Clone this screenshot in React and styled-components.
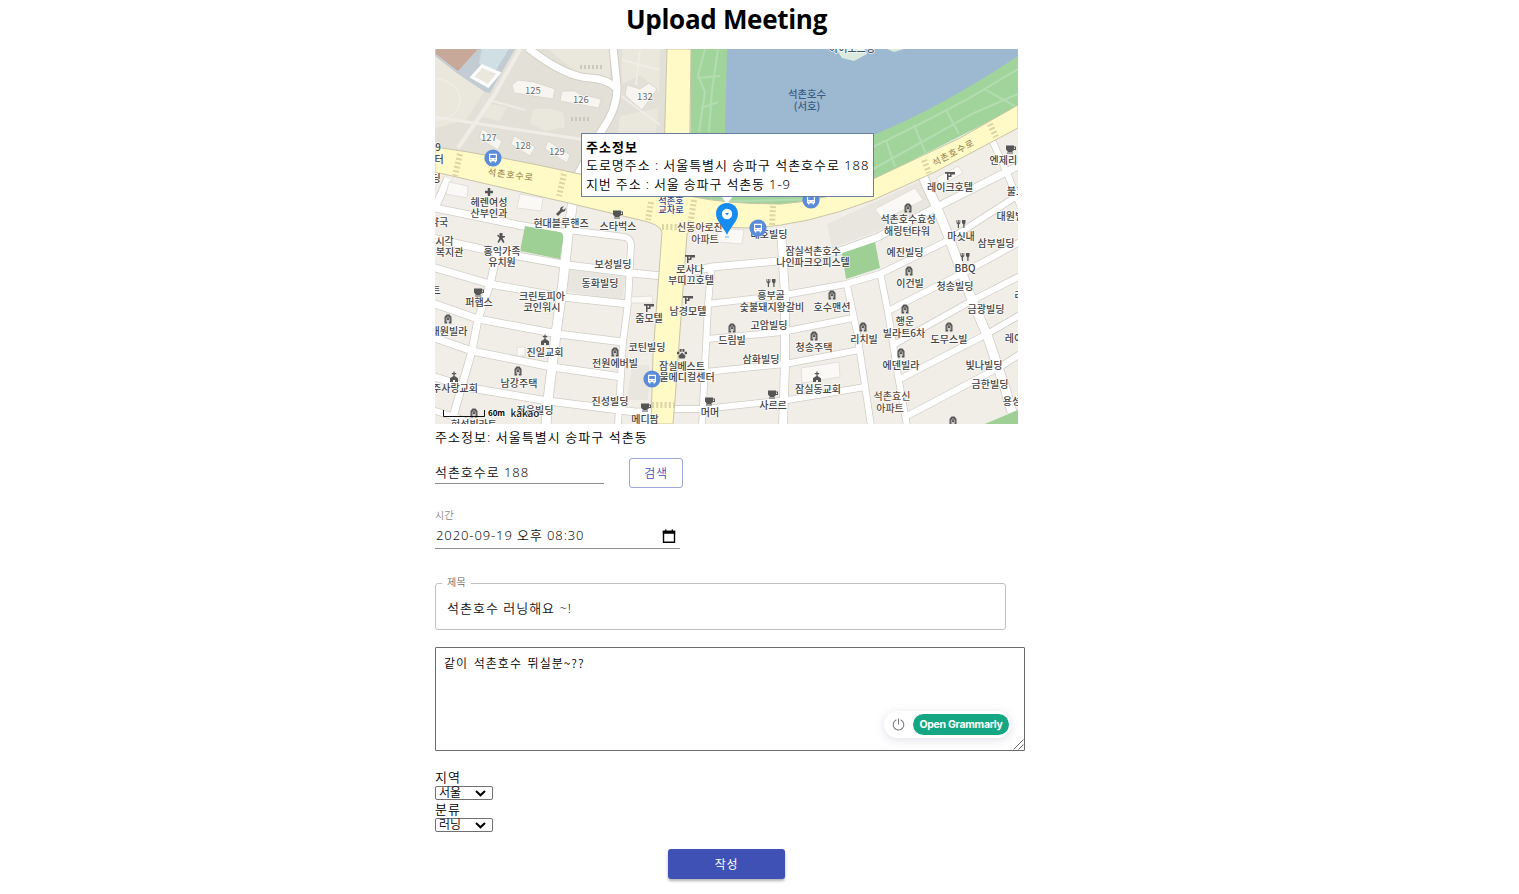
import React from 'react';
import styled, { createGlobalStyle } from 'styled-components';

const GlobalStyle = createGlobalStyle`
  *, *::before, *::after { box-sizing: border-box; }
  body {
    margin: 0;
    background: #fff;
    color: #000;
    font-family: 'Noto Sans', 'Noto Sans CJK KR', sans-serif;
    overflow: hidden;
  }
`;

const Page = styled.main`
  width: 583px;
  height: 894px;
  margin-left: 435px;
  display: flex;
  flex-direction: column;
  align-items: flex-start;
`;

const Title = styled.h1`
  width: 100%;
  height: 49px;
  margin: 0;
  padding-top: 1px;
  font: 700 26px/36px 'Open Sans', 'Noto Sans', sans-serif;
  letter-spacing: -0.3px;
  text-align: center;
`;

const MapFrame = styled.section`
  position: relative;
  width: 583px;
  height: 375px;
`;

const MapSvg = styled.svg`
  display: block;
  width: 583px;
  height: 375px;
`;

const InfoWindow = styled.div`
  position: absolute;
  left: 146px;
  top: 84px;
  width: 293px;
  height: 64px;
  padding: 4px 4px;
  background: #fff;
  border: 1px solid #6a7f9f;
  font-size: 13px;
  line-height: 18.4px;
  white-space: nowrap;
`;

const InfoLine = styled.div`
  font-weight: ${p => (p.$bold ? 700 : 350)};
  letter-spacing: ${p => p.$spacing};
`;

const AddressText = styled.p`
  height: 34px;
  margin: 0;
  font-weight: 350;
  font-size: 13px;
  line-height: 27px;
  letter-spacing: 1.05px;
  white-space: nowrap;
`;

const SearchRow = styled.div`
  display: flex;
  gap: 25px;
  height: 30px;
`;

const LineInput = styled.input`
  width: ${p => p.$width}px;
  height: 26px;
  padding: ${p => p.$pad || '0'};
  border: 0;
  border-bottom: 1px solid #8c8c8c;
  outline: 0;
  background: transparent;
  color: #111;
  font: 350 13px 'Noto Sans', 'Noto Sans CJK KR', sans-serif;
  letter-spacing: ${p => p.$spacing}px;
`;

const SearchButton = styled.button`
  width: 54px;
  height: 30px;
  padding: 0 0 2px;
  border: 1px solid #9fa8da;
  border-radius: 3px;
  background: #fff;
  color: #3f51b5;
  font: 350 12px 'Noto Sans CJK KR', sans-serif;
  letter-spacing: 0.8px;
`;

const DateField = styled.label`
  display: flex;
  flex-direction: column;
  position: relative;
  width: 245px;
  margin-top: 19px;
  color: #858585;
  font-weight: 350;
  font-size: 10px;
  line-height: 16px;
  letter-spacing: 0.4px;
`;

const CalendarIcon = styled.svg`
  position: absolute;
  right: 4px;
  bottom: 5px;
  width: 14px;
  height: 15px;
`;

const TitleField = styled.fieldset`
  width: 571px;
  height: 55px;
  margin: 26px 0 0;
  padding: 0 11px 0 5px;
  border: 1px solid #c0c0c0;
  border-radius: 3px;
  min-width: 0;
`;

const Legend = styled.legend`
  height: 17px;
  margin-left: 1px;
  padding: 0 5px;
  color: #666;
  font-weight: 350;
  font-size: 10px;
  line-height: 14px;
  letter-spacing: 0.4px;
`;

const PlainInput = styled.input`
  display: block;
  width: 100%;
  height: 31px;
  padding: 0 6px;
  border: 0;
  outline: 0;
  color: #111;
  font: 350 13px 'Noto Sans', 'Noto Sans CJK KR', sans-serif;
  letter-spacing: 1px;
`;

const MessageBox = styled.div`
  position: relative;
  width: 590px;
  height: 104px;
  margin-top: 17px;
`;

const Message = styled.textarea`
  display: block;
  width: 590px;
  height: 104px;
  padding: 7px 8px;
  border: 1px solid #6c6c6c;
  border-radius: 1px;
  outline: 0;
  resize: none;
  color: #000;
  font: 350 12px/16px 'Noto Sans CJK KR', monospace;
  letter-spacing: 1px;
  word-spacing: 2px;
`;

const ResizeGrip = styled.svg`
  position: absolute;
  right: 1px;
  bottom: 1px;
  width: 11px;
  height: 11px;
`;

const Grammarly = styled.div`
  position: absolute;
  right: 14px;
  bottom: 13px;
  display: flex;
  align-items: center;
  justify-content: space-between;
  width: 127px;
  height: 27px;
  padding: 0 2px 0 8px;
  border-radius: 14px;
  background: #fff;
  box-shadow: 0 2px 10px rgba(60, 70, 110, 0.16);
`;

const GrammarlyPill = styled.span`
  width: 96px;
  height: 21px;
  border-radius: 11px;
  background: #15a683;
  color: #fff;
  font: 700 10.5px/21px Inter, sans-serif;
  letter-spacing: -0.28px;
  text-align: center;
  white-space: nowrap;
`;

const Choices = styled.div`
  display: flex;
  flex-direction: column;
  margin-top: 17px;
`;

const ChoiceLabel = styled.span`
  height: 18px;
  font-weight: 350;
  font-size: 13px;
  line-height: 18px;
  letter-spacing: 1px;
`;

const SelectBox = styled.div`
  display: flex;
  align-items: center;
  width: 58px;
  height: 14px;
  padding: 0 6px 0 3px;
  border: 1px solid #707070;
  border-radius: 2px;
  justify-content: space-between;
`;

const SelectValue = styled.span`
  font-weight: 350;
  font-size: 12px;
  line-height: 12px;
`;

const SubmitButton = styled.button`
  align-self: center;
  width: 117px;
  height: 30px;
  margin-top: 17px;
  padding: 0 0 2px;
  border: 0;
  border-radius: 3px;
  background: #3f51b5;
  box-shadow: 0 2px 3px rgba(0, 0, 0, 0.3);
  color: #fff;
  font: 400 12px 'Noto Sans CJK KR', sans-serif;
  letter-spacing: 0.8px;
`;

const MapText = styled.text`
  font-family: 'Noto Sans CJK KR', sans-serif;
  font-size: ${p => p.$size || 10}px;
  font-weight: ${p => p.$weight || 500};
  fill: ${p => p.$color || '#444'};
  stroke: ${p => (p.$halo === false ? 'none' : 'rgba(255,255,255,0.75)')};
  stroke-width: 1.6px;
  stroke-linejoin: round;
  paint-order: stroke;
  text-anchor: middle;
`;

const streets = [
  [7, 'M448 178L435 208L523 226L568 233'],
  [9, 'M573 200L568 235L563 282L556 334L548 400L546 426'],
  [6, 'M568 230L625 237Q631 239 631 245L628 303L623 342L618 424'],
  [7, 'M432 238L495 252L568 265L632 273L662 276'],
  [7, 'M432 267L490 284L562 297L628 304'],
  [7, 'M432 303L478 319L558 334L623 342'],
  [7, 'M432 337L472 351L552 367L622 377'],
  [7, 'M432 376L465 387L548 401L635 412L652 412'],
  [6, 'M432 410L455 417L478 426'],
  [7, 'M498 250L490 284L478 319L472 351L461 389L453 417'],
  [7, 'M686 273L712 267L778 261L810 255L840 251L876 238L935 208L1020 165'],
  [6, 'M707 304L785 295L846 284L880 274L947 241L1020 194'],
  [6, 'M707 339L782 332L853 318'],
  [6, 'M705 372L785 364L859 350'],
  [6, 'M673 409L703 409L788 400L865 387'],
  [6, 'M711 270L708 305L702 426'],
  [8, 'M781 228L785 295L785 365L783 426'],
  [6, 'M846 281L857 332L871 426'],
  [6, 'M880 272L888 312L898 376L907 426'],
  [9, 'M923 177L937 208L948 235L970 295L987 335L1005 388L1012 412'],
  [6, 'M888 311L963 273L1020 242'],
  [6, 'M893 345L973 300L1020 276'],
  [6, 'M900 379L987 334L1020 315'],
  [6, 'M907 416L1000 367L1020 354'],
  [6, 'M992 140L1007 173L1020 205'],
];

const labels = [
  [438, 147, '9'], [439, 159, '터'], [436, 178, '딩'],
  [489, 202, '헤렌여성'], [489, 213, '산부인과'], [439, 222, '약국'],
  [561, 223, '현대블루핸즈'], [618, 226, '스타벅스'], [769, 234, '대호빌딩'],
  [950, 187, '레이크호텔'], [1008, 160, '엔제리너'], [1016, 191, '불고'],
  [1015, 216, '대원빌라'], [908, 219, '석촌호수효성'], [907, 231, '해링턴타워'],
  [961, 236, '마싯내'], [996, 243, '삼부빌딩'], [905, 252, '예진빌딩'],
  [965, 268, 'BBQ'], [910, 283, '이건빌'], [955, 286, '청송빌딩'],
  [986, 309, '금광빌딩'], [1019, 295, '러'], [905, 321, '행운'],
  [904, 333, '빌라트6차'], [949, 339, '도무스빌'], [864, 339, '리치빌'],
  [1014, 338, '레이'], [901, 365, '에덴빌라'], [984, 365, '빛나빌딩'],
  [990, 384, '금한빌딩'], [1012, 401, '용성'], [832, 307, '호수맨션'],
  [814, 347, '청송주택'], [818, 389, '잠실동교회'], [813, 251, '잠실석촌호수'],
  [813, 262, '나인파크오피스텔'], [771, 295, '흥부골'], [772, 307, '숯불돼지왕갈비'],
  [769, 325, '고암빌딩'], [732, 340, '드림빌'], [761, 359, '삼화빌딩'],
  [773, 405, '사르르'], [710, 412, '머머'], [645, 419, '메디팜'],
  [682, 366, '잠실베스트'], [687, 377, '물메디컬센터'], [690, 269, '로사나'],
  [691, 280, '부띠끄호텔'], [688, 311, '남경모텔'], [649, 318, '줌모텔'],
  [647, 347, '코틴빌딩'], [615, 363, '전원에버빌'], [610, 401, '진성빌딩'],
  [545, 352, '진일교회'], [519, 383, '남강주택'], [535, 410, '정은빌딩'],
  [474, 424, '현성빌라트'], [455, 388, '주사랑교회'], [449, 331, '대원빌라'],
  [479, 302, '퍼햅스'], [542, 296, '크린토피아'], [542, 307, '코인워시'],
  [502, 251, '홍익가족'], [502, 262, '유치원'], [613, 264, '보성빌딩'],
  [600, 283, '동화빌딩'], [440, 241, '각시각'], [445, 252, '행복지관'], [436, 290, '트'],
];

const blockNumbers = [
  [533, 90, '125'], [581, 99, '126'], [645, 96, '132'],
  [489, 137, '127'], [523, 145, '128'], [557, 151, '129'],
];

const glyphs = {
  home: 'M-3.5 4.5V-2L-1.5 -4.5H1.5L3.5 -2V4.5H.8V1H-.8V4.5Z M-2.1 -1.5V3H-1.5V-1.5Z M-.3 -3V-.4H.3V-3Z M1.5 -1.5V3H2.1V-1.5Z',
  cup: 'M-5 -3.5H3V-2.5H5V1H3L1 3H-3L-5 .5Z M3 -1.5V0H4V-1.5Z M-4 3.5H2V4.5H-4Z',
  bed: 'M-5 -4H5V-1.5H1.5V1H-1.5V4H-3V-2.2H-5Z M-1.5 -2.2V-.4H0V-2.2Z',
  church: 'M-.6 -5.5H.6V-4H2.2V-2.8H.6V-1L4 1.2V5H1V3H-1V5H-4V1.2L-.6 -1V-2.8H-2.2V-4H-.6Z',
  plus: 'M-1.2 -4H1.2V-1.2H4V1.2H1.2V4H-1.2V1.2H-4V-1.2H-1.2Z',
  wrench: 'M4.5 -3L2.5 -1L1 -2.5L3 -4.5Q-1 -5 -1 -1L-5 3L-3 5L1 1Q5 1 4.5 -3Z',
  fork: 'M-4.5 -4H-3.7V-1.5H-3V-4H-2.2V-1.5H-1.5V-4H-.7V-1L-2 .5V4H-3.2V.5L-4.5 -1Z M1 -4H4.5V-1L3.5 .5V4H2.3V.5L1 -1Z',
  child: 'M-1.5 -5H1.5V-2H4V-.8L1.5 0L3.5 4L2.2 5L0 1.5L-2.4 5L-3.5 4L-1.5 0L-4 -2.5L-3 -3.5L-1.5 -2Z',
  paw: 'M-5 -2.2H-2.6V.2H-5Z M-2.4 -5H-.4V-2.2H-2.4Z M.4 -5H2.4V-2.2H.4Z M2.6 -2.2H5V.2H2.6Z M0 -1.6L3.6 2L2.6 4.5H-2.6L-3.6 2Z',
};

const places = [
  ['home', 448, 319], ['home', 615, 352], ['home', 518, 371], ['home', 474, 413],
  ['home', 732, 328], ['home', 814, 336], ['home', 832, 295], ['home', 909, 271],
  ['home', 905, 309], ['home', 863, 327], ['home', 949, 327], ['home', 901, 353],
  ['home', 953, 421], ['home', 908, 208],
  ['cup', 618, 214], ['cup', 479, 292], ['cup', 773, 394], ['cup', 710, 401],
  ['cup', 646, 407], ['cup', 1011, 149],
  ['bed', 950, 176], ['bed', 690, 259], ['bed', 688, 300], ['bed', 649, 308],
  ['church', 545, 340], ['church', 454, 377], ['church', 817, 377],
  ['plus', 489, 192], ['wrench', 561, 211], ['child', 501, 238], ['paw', 682, 354],
  ['fork', 961, 224], ['fork', 965, 257], ['fork', 771, 283],
];

const crosswalks = [
  [460, 154, 455, 176], [564, 174, 559, 196], [651, 202, 648, 220],
  [694, 200, 690, 226], [773, 206, 772, 226], [924, 160, 929, 173], [990, 124, 996, 137],
];

const Bus = ({ x, y }) => (
  <g transform={`translate(${x} ${y})`}>
    <circle r="8.6" fill="#5b8cd9" />
    <path d="M-4 -4.2H4V3.2H3V4.5H1.6V3.2H-1.6V4.5H-3V3.2H-4Z" fill="#fff" />
    <path d="M-2.8 -3H2.8V0H-2.8Z M-2.6 1.2H-1.4V2.1H-2.6Z M1.4 1.2H2.6V2.1H1.4Z" fill="#5b8cd9" />
  </g>
);

function StreetMap() {
  return (
    <MapSvg viewBox="435 49 583 375">
      <rect x="435" y="49" width="583" height="375" fill="#f1eee8" />

      <path d="M435 49H667L664 192L575 173L435 147Z" fill="#e3e0d8" />
      <g fill="#eae7dd">
        <path d="M435 52Q470 66 485 90L466 120L435 128Z" />
        <path d="M533 110Q548 106 563 113L565 127L545 131L530 123Z" />
        <path d="M548 49H610V82L575 72Z" />
        <path d="M622 49H660L659 92L640 75L622 84Z" />
        <path d="M620 116L658 108L656 133H618Z" />
        <path d="M489 104L507 107L500 121L482 117Z" />
      </g>
      <g fill="none" stroke="#efede6" strokeWidth="3">
        <path d="M435 117L500 127L600 142" />
        <path d="M520 49L495 94L458 148" strokeWidth="4" />
        <path d="M480 118L489 100L525 110M622 60L660 70M620 95L660 125M640 50L636 85" strokeWidth="2" />
        <path d="M435 78Q465 84 459 107Q451 121 435 120" strokeWidth="1.5" />
      </g>
      <path d="M435 49H515L490 93L485 92L458 74L435 56Z" fill="#c4ccd3" />
      <path d="M436 49H478L458 71L436 54Z" fill="#c8a898" />
      <path d="M482 49H509L496 70L479 64Z" fill="#cfdfe4" />
      <path d="M482 66L499 73L488 86L472 77Z" fill="#eae7dd" stroke="#fff" strokeWidth="3" />
      <path d="M528 48Q565 77 590 78Q607 79 616 88M613 47L617 86Q618 108 602 130L578 174" fill="none" stroke="#d2cec5" strokeWidth="9" />
      <path d="M528 48Q565 77 590 78Q607 79 616 88M613 47L617 86Q618 108 602 130L578 174" fill="none" stroke="#fff" strokeWidth="7" />
      <g fill="#f7f5f0" stroke="#d8d4cd" strokeWidth=".8">
        <path d="M518 80L534 82L546 86L555 89L553 99L514 93L512 85Z" />
        <path d="M562 91L575 91L579 94L601 99L599 108L560 101Z" />
        <path d="M627 85L640 89L649 83L657 89L642 110L635 104L625 95Z" />
        <path d="M482 129L502 141L498 150L479 138Z" />
        <path d="M514 136L535 147L530 156L511 144Z" />
        <path d="M548 141L570 155L567 163L545 149Z" />
      </g>
      <path d="M580 67H603M571 119H590" stroke="#cbc8bf" strokeWidth="4" strokeDasharray="2 2" />

      <path d="M691 49H1018V107L873 180L824 206H690Z" fill="#a1d49b" />
      <path d="M727 49H1018V56Q940 108 873 135L830 160H727L725 128Z" fill="#9db9d1" />
      <path d="M836 49H864L867 54L854 61L842 58Z M887 49H904L894 52Z" fill="#dce9df" />
      <g fill="none" stroke="#b3ddb1" strokeWidth="2">
        <path d="M705 49L698 75L705 92L699 132M718 49L712 90L709 132M697 78L720 76M701 108L718 102" />
        <path d="M873 147L920 124L966 100L1018 69M873 169L920 143L974 113L1018 94M914 125L926 154M946 110L959 134M886 140L895 167M984 89L1018 108" />
        <path d="M693 200L740 201L825 199" />
      </g>

      <g fill="#e9e6df">
        <path d="M632 365H650L648 400H627Z" />
        <path d="M566 269L626 277L622 301L564 291Z" />
        <path d="M827 224L920 181L934 205L878 231L832 248Z" />
      </g>
      <g fill="none" strokeLinejoin="round">
        {streets.map(([w, d]) => <path key={d} d={d} stroke="#d0cdc7" strokeWidth={w + 1.5} />)}
        {streets.map(([w, d]) => <path key={d} d={d} stroke="#fff" strokeWidth={w} />)}
      </g>
      <g fill="#faf9f5" stroke="#dedbd5" strokeWidth=".8">
        <path d="M449 182L468 186L467 198L446 194Z M520 194L543 198L541 211L517 208Z" />
        <path d="M875 209L915 188L923 200L883 220Z M936 178L958 166L963 173L940 186Z" />
        <path d="M717 228L744 230L742 244L718 242Z M801 368L839 362L840 377L802 383Z" />
        <path d="M517 347H525V356H517Z M631 297L652 296L653 303L631 303Z" />
      </g>
      <path d="M525 226L560 232Q564 233 563 240L560 259L520 251Z M842 253L875 242L880 268L846 279Z M980 426L1018 410V426Z" fill="#9ed095" />

      <path d="M435 147Q500 156 575 173L663 190L667 49H691L689 196Q725 204 780 204Q830 201 873 179L960 138L1018 105V128L935 172L873 200Q805 226 750 228L713 227Q692 224 687 234L675 400L673 424H651L653 355L662 232Q660 224 640 220L560 201L435 172Z" fill="#fffac6" stroke="#c9c4a8" strokeWidth="1" />
      <g stroke="#ddd5a5" strokeWidth="6" strokeDasharray="2 2.2">
        {crosswalks.map(([x1, y1, x2, y2]) => <path key={x1} d={`M${x1} ${y1}L${x2} ${y2}`} />)}
        <path d="M652 405H674M662 227H684" />
      </g>

      {blockNumbers.map(([x, y, t]) => (
        <MapText key={t} x={x} y={y + 3.5} $size={9.5} $color="#6c6c6c" $weight={400}>{t}</MapText>
      ))}
      <MapText x="807" y="98" $size={10.4} $color="#3b5b83" $halo={false}>석촌호수</MapText>
      <MapText x="807" y="110" $size={10.4} $color="#3b5b83" $halo={false}>(서호)</MapText>
      <MapText x="852" y="52" $color="#3d5868">아이오드링</MapText>
      <MapText x="511" y="178" $size={9} $color="#a08e58" $halo={false} transform="rotate(7 511 174)" letterSpacing="1">석촌호수로</MapText>
      <MapText x="953" y="156" $size={9} $color="#a08e58" $halo={false} transform="rotate(-28 953 152)" letterSpacing="1">석촌호수로</MapText>
      <MapText x="671" y="203.5" $size={9.2} $color="#344789">석촌호</MapText>
      <MapText x="671" y="212.5" $size={9.2} $color="#344789">교차로</MapText>
      <MapText x="700" y="231.3" $color="#66503f">신동아로잔</MapText>
      <MapText x="705" y="243" $color="#66503f">아파트</MapText>
      <MapText x="892" y="399.7" $color="#66503f">석촌효신</MapText>
      <MapText x="890" y="411.7" $color="#66503f">아파트</MapText>
      {labels.map(([x, y, t]) => <MapText key={t + x} x={x} y={y + 3.7}>{t}</MapText>)}
      {places.map(([kind, x, y]) => (
        <path key={`${kind}${x}`} d={glyphs[kind]} transform={`translate(${x} ${y})`} fill="#555" fillRule="evenodd" />
      ))}
      <Bus x={493} y={158} />
      <Bus x={758} y={228} />
      <Bus x={811} y={200} />
      <Bus x={652} y={379} />

      <path d="M443.5 410V416.5H484.5V410" fill="none" stroke="#111" />
      <MapText x="496.5" y="416" $size={8} $weight={700} $color="#000">60m</MapText>
      <MapText x="525" y="417" $size={10} $weight={500} $color="#222">kakao</MapText>

      <path d="M721 196H733L727 204Z" fill="#fff" />
      <path d="M727 203C720 203 716 208 716 214C716 221 723 226 727 235C731 226 738 221 738 214C738 208 734 203 727 203Z" fill="#168cf0" />
      <circle cx="727" cy="214" r="5.2" fill="#fff" />
      <path d="M725 213H729L727 215.5Z" fill="#168cf0" />
      <path d="M725 237H729" stroke="#77aee4" />
    </MapSvg>
  );
}

const Chevron = () => (
  <svg width="11" height="7" viewBox="0 0 11 7">
    <path d="M1 1L5.5 5.3L10 1" fill="none" stroke="#000" strokeWidth="2" />
  </svg>
);

export default function App() {
  return (
    <Page>
      <GlobalStyle />
      <Title>Upload Meeting</Title>
      <MapFrame>
        <StreetMap />
        <InfoWindow>
          <InfoLine $bold $spacing="1px">주소정보</InfoLine>
          <InfoLine $spacing="0.95px">도로명주소 : 서울특별시 송파구 석촌호수로 188</InfoLine>
          <InfoLine $spacing="0.85px">지번 주소 : 서울 송파구 석촌동 1-9</InfoLine>
        </InfoWindow>
      </MapFrame>
      <AddressText>주소정보: 서울특별시 송파구 석촌동</AddressText>
      <SearchRow>
        <LineInput $width={169} $spacing={0.95} $pad="1px 0 0" defaultValue="석촌호수로 188" />
        <SearchButton>검색</SearchButton>
      </SearchRow>
      <DateField>
        시간
        <LineInput $width={245} $spacing={0.9} $pad="0 0 2px 1px" defaultValue="2020-09-19 오후 08:30" />
        <CalendarIcon viewBox="0 0 14 15">
          <path d="M1.5 2.5H12.5V13.3H1.5Z" fill="none" stroke="#000" strokeWidth="1.4" />
          <path d="M.8 1.8H13.2V4.8H.8ZM3 .5H4.4V2H3ZM9.6 .5H11V2H9.6Z" />
        </CalendarIcon>
      </DateField>
      <TitleField>
        <Legend>제목</Legend>
        <PlainInput defaultValue="석촌호수 러닝해요 ~!" />
      </TitleField>
      <MessageBox>
        <Message spellCheck={false} defaultValue="같이 석촌호수 뛰실분~??" />
        <Grammarly>
          <svg width="13" height="13" viewBox="0 0 13 13" fill="none" stroke="#777b86" strokeWidth="1.1" strokeLinecap="round">
            <path d="M4 2A5.3 5.3 0 1 0 9 2M6.5 .8V6" />
          </svg>
          <GrammarlyPill>Open Grammarly</GrammarlyPill>
        </Grammarly>
        <ResizeGrip viewBox="0 0 11 11">
          <path d="M.5 10.5L10.5 .5M5.5 10.5L10.5 5.5" stroke="#555" strokeWidth=".9" />
        </ResizeGrip>
      </MessageBox>
      <Choices>
        <ChoiceLabel>지역</ChoiceLabel>
        <SelectBox><SelectValue>서울</SelectValue><Chevron /></SelectBox>
        <ChoiceLabel>분류</ChoiceLabel>
        <SelectBox><SelectValue>러닝</SelectValue><Chevron /></SelectBox>
      </Choices>
      <SubmitButton>작성</SubmitButton>
    </Page>
  );
}
